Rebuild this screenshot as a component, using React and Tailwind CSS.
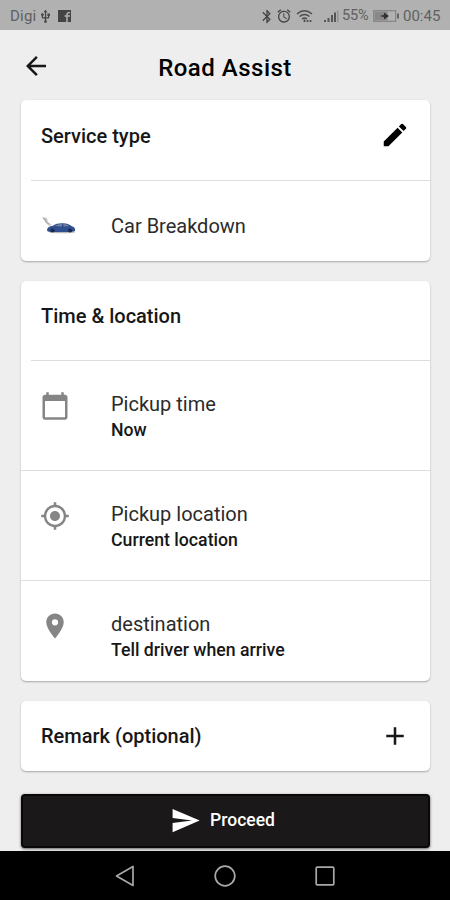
import React from 'react';
import {
  MdAdd,
  MdAlarm,
  MdArrowBack,
  MdBluetooth,
  MdCalendarToday,
  MdEdit,
  MdGpsFixed,
  MdPlace,
  MdSend,
  MdUsb
} from 'react-icons/md';

const details = [
  { id: 'time', label: 'Pickup time', value: 'Now', icon: MdCalendarToday },
  { id: 'pickup', label: 'Pickup location', value: 'Current location', icon: MdGpsFixed },
  { id: 'destination', label: 'destination', value: 'Tell driver when arrive', icon: MdPlace },
];

const WifiIcon = () => (
  <svg className="ml-[4px] h-[15px] w-[18px]" viewBox="0 0 18 15" fill="none" stroke="#4c4c4c" strokeWidth="1.5">
    <path d="M1 5Q8.500 -1.500 16 5M3.500 7.500Q8.500 3.500 13.500 7.500M6 10Q8.500 8 11 10" />
    <path d="M8.500 10.500v2.500M11.500 11v2M14.500 11v2" strokeWidth="1.700" />
  </svg>
);

const SignalIcon = () => (
  <svg className="ml-[10px] h-[13px] w-[15px]" viewBox="0 0 15 13" fill="#555">
    <path d="M0 10h2v2H0zM3.500 8h2v4h-2zM7 5h2v7H7zM10 2.500h2V12h-2z" />
    <path d="M13.300 .5h1V12h-1z" opacity=".5" />
  </svg>
);

const BatteryIcon = () => (
  <svg className="ml-[4px] h-[12px] w-[27px]" viewBox="0 0 27 12" fill="none">
    <rect x=".7" y=".7" width="22" height="10.600" stroke="#858585" strokeWidth="1.200" />
    <path d="M1.500 1.500h13v9h-13z" fill="#888" />
    <path d="M7 6l4-1.200V2.500L16 6l-5 3.500V7.200z" fill="#333" />
    <path d="M24 3.500h2v5h-2z" fill="#666" />
  </svg>
);

const CarIcon = () => (
  <svg className="h-[20px] w-[36px]" viewBox="0 0 36 20">
    <path d="M1 1l5 1 1 4 4 3-3 1-4-4z" fill="#c9cbcc" />
    <path d="M2 2l2 1 1 3 3 2" stroke="#999" fill="none" strokeWidth=".8" />
    <ellipse cx="21" cy="16.300" rx="13" ry="1" fill="#bbb" />
    <path d="M6 14c0-2 2-4 6-4.300C15 7.500 18 7 22 7.200c4 0 6 1.300 9 3 2.500.8 3.500 2 3 5L30 16H10c-3 0-4-.8-4-2z" fill="#304f91" />
    <path d="M14 10c2-1.500 4-2 7-2v2.500zM22 8c3 0 5 .8 6 2l-5 .6z" fill="#71839d" />
    <circle cx="11.500" cy="14.500" r="2.100" fill="#1c2a4a" />
    <circle cx="29" cy="14.500" r="2.100" fill="#1c2a4a" />
  </svg>
);

const StatusBar = () => (
  <div className="flex h-[30px] shrink-0 items-center bg-[#b1b1b1] pt-[2px] pl-[10px] pr-[9px] text-[15px] text-[#606060]">
    <span className="w-[27px] whitespace-nowrap tracking-[0.2px]">Digi</span>
    <MdUsb className="ml-[1px] h-[15px] w-[15px] text-[#444]" />
    <svg className="ml-[5px] h-[12px] w-[13px]" viewBox="0 0 13 12">
      <path d="M0 0h13v12H0z" fill="#444" />
      <path d="M9 12V4.500Q9 2.500 12 2.500M6.500 6H12" stroke="#b1b1b1" strokeWidth="1.500" fill="none" />
    </svg>
    <div className="ml-auto flex items-center">
      <MdBluetooth className="h-[17px] w-[16px] text-[#444]" />
      <MdAlarm className="ml-px h-[16px] w-[16px] text-[#444]" />
      <WifiIcon />
      <SignalIcon />
      <span className="ml-[3px] w-[27px] whitespace-nowrap text-[14.5px] tracking-[-0.1px]">55%</span>
      <BatteryIcon />
      <span className="ml-[3px] w-[38px] whitespace-nowrap">00:45</span>
    </div>
  </div>
);

const Card = ({ className, children }) => (
  <section className={`mr-[20px] ml-[21px] rounded-[5px] bg-white shadow-[0_1px_2px_rgba(0,0,0,0.3)] ${className}`}>
    {children}
  </section>
);

export default function App() {
  return (
    <div className="flex h-[900px] w-[450px] flex-col overflow-hidden bg-[#eeeeee] font-['Roboto',sans-serif] text-[#171717]">
      <StatusBar />

      {/* Header */}
      <header className="flex h-[70px] shrink-0 items-center px-[21px] pt-[2px]">
        <MdArrowBack className="h-[30px] w-[30px]" />
        <h1 className="flex-1 pt-[3px] pr-[30px] text-center text-[24px] font-medium tracking-[0.5px] text-black">Road Assist</h1>
      </header>

      <main className="flex flex-1 flex-col">
        {/* Service type */}
        <Card className="h-[161px]">
          <div className="flex h-[80px] items-start justify-between pl-[20px] pr-[20px] pt-[20px]">
            <h2 className="pt-px text-[20px] leading-[30px] font-medium">Service type</h2>
            <MdEdit className="h-[30px] w-[30px] text-black" />
          </div>
          <div className="ml-[10px] h-px bg-[#dddddd]" />
          <div className="flex h-[80px] items-center pl-[20px] pt-[10px]">
            <CarIcon />
            <span className="ml-[34px] text-[20px] text-[#2b2b2b]">Car Breakdown</span>
          </div>
        </Card>

        {/* Time & location */}
        <Card className="mt-[20px] h-[400px]">
          <h2 className="h-[79px] pl-[20px] pt-[20px] text-[20px] leading-[30px] font-medium">
            Time &amp; location
          </h2>
          <div className="ml-[10px] h-px bg-[#dddddd]" />
          {details.map(({ id, label, value, icon: Icon }, index) => (
            <div key={id} className={`flex h-[110px] pl-[19px] pt-[30px] ${index < 2 ? 'border-b border-[#dddddd]' : ''}`}>
              <Icon className="h-[30px] w-[30px] shrink-0 text-[#858585]" />
              <div className="ml-[41px]">
                <p className="text-[20px] leading-[26px] text-[#2b2b2b]">{label}</p>
                <p className="text-[17.7px] leading-[26px] font-medium">{value}</p>
              </div>
            </div>
          ))}
        </Card>

        {/* Remark */}
        <Card className="mt-[20px] flex h-[70px] items-center justify-between pl-[20px] pr-[20px]">
          <h2 className="text-[20px] font-medium">Remark (optional)</h2>
          <MdAdd className="h-[30px] w-[30px]" />
        </Card>

        <button className="mr-[20px] ml-[21px] mt-[23px] flex h-[54px] items-center justify-center rounded-[4px] border-2 border-[#080808] bg-[#1a1818] pr-[6px] pb-[2px] text-[17.5px] font-medium text-white shadow-[0_1px_3px_rgba(0,0,0,0.6)]">
          <MdSend className="h-[31px] w-[31px]" />
          <span className="ml-[9px]">Proceed</span>
        </button>
      </main>

      {/* Navigation bar */}
      <nav className="flex h-[49px] shrink-0 items-center justify-center gap-[76px] bg-black text-[#a8a8a8]">
        <svg className="h-[24px] w-[24px]" viewBox="0 0 24 24" fill="none" stroke="currentColor" strokeWidth="1.700" strokeLinejoin="round">
          <path d="M20 2.500v19L3.500 12z" />
        </svg>
        <svg className="h-[24px] w-[24px]" viewBox="0 0 24 24" fill="none" stroke="currentColor" strokeWidth="1.700">
          <circle cx="12" cy="12" r="9.800" />
        </svg>
        <svg className="h-[24px] w-[24px]" viewBox="0 0 24 24" fill="none" stroke="currentColor" strokeWidth="1.700">
          <rect x="3.200" y="3.200" width="17.600" height="17.600" rx="1" />
        </svg>
      </nav>
    </div>
  );
}
